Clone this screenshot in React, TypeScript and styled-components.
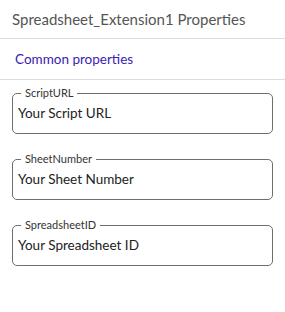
import React from 'react';
import styled, { createGlobalStyle } from 'styled-components';

const GlobalStyle = createGlobalStyle`
  body {
    margin: 0;
    background: #ffffff;
    font-family: Lato, "Open Sans", sans-serif;
  }
`;

interface IField {
  label: string;
  value: string;
}

const fields: IField[] = [
  { label: 'ScriptURL', value: 'Your Script URL' },
  { label: 'SheetNumber', value: 'Your Sheet Number' },
  { label: 'SpreadsheetID', value: 'Your Spreadsheet ID' },
];

const Panel = styled.div`
  width: 285px;
  height: 312px;
  display: flex;
  flex-direction: column;
`;

const Header = styled.div`
  height: 39px;
  box-sizing: border-box;
  padding: 0 12px;
  display: flex;
  align-items: center;
  border-bottom: 1px solid #dcdcdc;
  font-size: 15px;
  color: #555555;
`;

const Section = styled.div`
  height: 41px;
  box-sizing: border-box;
  padding: 0 15px;
  display: flex;
  align-items: center;
  border-bottom: 1px solid #dcdcdc;
  font-size: 13.5px;
  color: #3b22b0;
`;

const Fields = styled.div`
  display: flex;
  flex-direction: column;
  gap: 19px;
  padding: 7px 12px 0;
`;

const Box = styled.fieldset`
  margin: 0;
  padding: 0;
  border: 1px solid #6e6e6e;
  border-radius: 5px;
  min-width: 0;
`;

const Legend = styled.legend`
  margin-left: 8px;
  padding: 0 4px;
  font-size: 11px;
  line-height: 12px;
  height: 12px;
  color: #333333;
`;

const Inner = styled.div`
  height: 34px;
  box-sizing: border-box;
  padding: 0 5px 6px;
  display: flex;
  align-items: center;
  font-size: 13.5px;
  color: #222222;
`;

export default function App() {
  return (
    <Panel>
      <GlobalStyle />
      <Header>Spreadsheet_Extension1 Properties</Header>
      <Section>Common properties</Section>
      <Fields>
        {fields.map((f) => (
          <Box key={f.label}>
            <Legend>{f.label}</Legend>
            <Inner>{f.value}</Inner>
          </Box>
        ))}
      </Fields>
    </Panel>
  );
}
